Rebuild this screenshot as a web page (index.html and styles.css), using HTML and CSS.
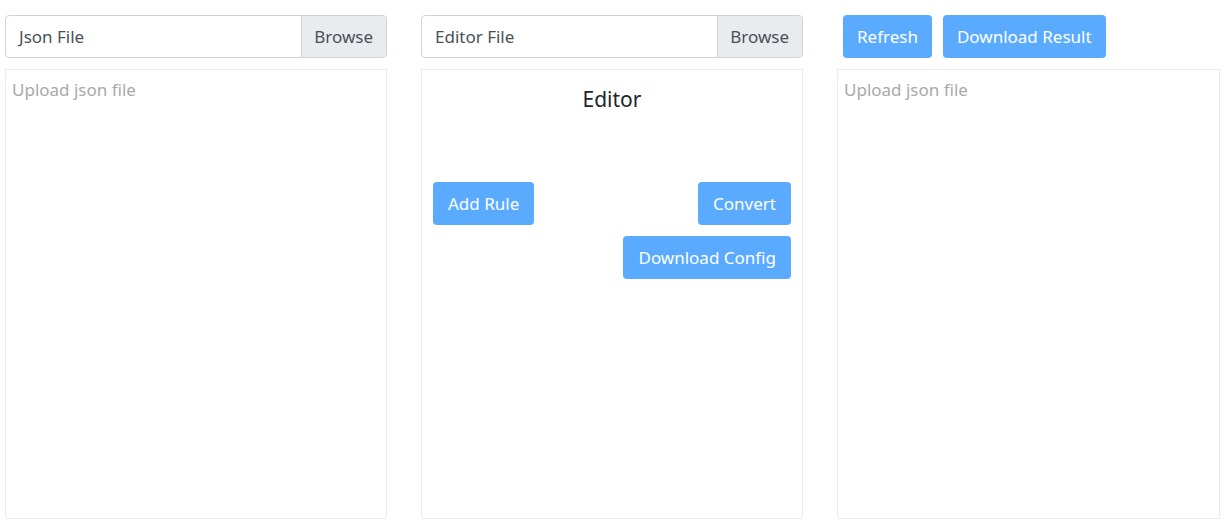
FILE: index.html
```html
<!DOCTYPE html>
<html>
<head>
<meta charset="utf-8">
<link rel="stylesheet" href="styles.css">
</head>
<body>
<div class="page">
  <div class="col">
    <div class="file-input">
      <span class="file-label">Json File</span>
      <span class="file-browse">Browse</span>
    </div>
    <div class="panel">
      <div class="placeholder">Upload json file</div>
    </div>
  </div>
  <div class="col">
    <div class="file-input">
      <span class="file-label">Editor File</span>
      <span class="file-browse">Browse</span>
    </div>
    <div class="panel editor">
      <div class="editor-title">Editor</div>
      <div class="editor-actions">
        <button class="btn">Add Rule</button>
        <div class="right-actions">
          <button class="btn">Convert</button>
          <button class="btn">Download Config</button>
        </div>
      </div>
    </div>
  </div>
  <div class="col">
    <div class="toolbar">
      <button class="btn btn-tight">Refresh</button>
      <button class="btn btn-tight">Download Result</button>
    </div>
    <div class="panel">
      <div class="placeholder">Upload json file</div>
    </div>
  </div>
</div>
</body>
</html>
```
FILE: styles.css
```css
html, body {
  margin: 0;
  padding: 0;
  background: #fff;
}
body {
  font-family: "Noto Sans", "Open Sans", sans-serif;
  font-size: 17px;
  color: #212529;
}
.page {
  display: grid;
  grid-template-columns: 382px 382px 383px;
  column-gap: 34px;
  padding: 15px 0 0 5px;
}
.col {
  display: flex;
  flex-direction: column;
  gap: 11px;
}
.file-input {
  display: flex;
  height: 43px;
  box-sizing: border-box;
  border: 1px solid #ced4da;
  border-radius: 4px;
  overflow: hidden;
}
.file-label {
  flex: 1;
  display: flex;
  align-items: center;
  padding-left: 13px;
  color: #495057;
}
.file-browse {
  display: flex;
  align-items: center;
  padding: 0 13px 0 12px;
  background: #e9ecef;
  border-left: 1px solid #ced4da;
  color: #495057;
}
.panel {
  height: 450px;
  box-sizing: border-box;
  border: 1px solid #ebebeb;
  padding: 8px 6px;
}
.placeholder {
  color: #a9a9a9;
}
.editor {
  padding: 14px 11px;
}
.editor-title {
  text-align: center;
  font-size: 21px;
  line-height: 30px;
  color: #212529;
}
.editor-actions {
  margin-top: 68px;
  display: flex;
  justify-content: space-between;
  align-items: flex-start;
}
.right-actions {
  display: flex;
  flex-direction: column;
  align-items: flex-end;
  gap: 11px;
}
.btn {
  font-family: inherit;
  font-size: 17px;
  height: 43px;
  padding: 0 15px;
  border: none;
  border-radius: 4px;
  background: #5aabff;
  color: #fff;
  cursor: pointer;
}
.btn-tight {
  padding: 0 14px;
}
.toolbar {
  display: flex;
  gap: 11px;
  padding-left: 6px;
}
```
